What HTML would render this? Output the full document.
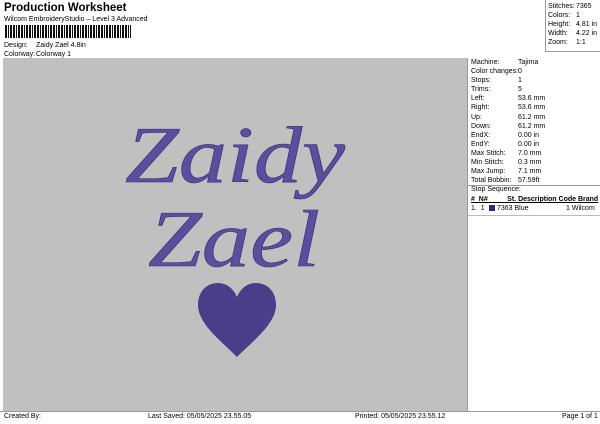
<!DOCTYPE html>
<html><head><style>
*{margin:0;padding:0;box-sizing:border-box}
body{width:600px;height:424px;background:#fff;font-family:"Liberation Sans",sans-serif;font-size:7px;color:#000;position:relative;overflow:hidden}
.a{position:absolute;white-space:nowrap}
.rp div{height:9.1px;line-height:9.1px}
</style></head><body>
<div class="a" style="left:4px;top:2px;font-size:11.5px;font-weight:bold">Production Worksheet</div>
<div class="a" style="left:4px;top:16px">Wilcom EmbroideryStudio – Level 3 Advanced</div>
<div class="a" style="left:5px;top:25px;width:126px;height:13px;background:repeating-linear-gradient(90deg,#111 0 2px,#fff 2px 3px,#111 3px 4px,#fff 4px 5px,#111 5px 7px,#fff 7px 8px)"></div>
<div class="a" style="left:4px;top:42px">Design:</div><div class="a" style="left:36px;top:42px">Zaidy Zael 4.8in</div>
<div class="a" style="left:4px;top:51px">Colorway:</div><div class="a" style="left:36px;top:51px">Colorway 1</div>
<div class="a" style="left:545px;top:0;width:55px;height:52px;border-left:1px solid #999;border-bottom:1px solid #999"></div>
<div class="a rp" style="left:548px;top:2px"><div>Stitches:</div><div>Colors:</div><div>Height:</div><div>Width:</div><div>Zoom:</div></div>
<div class="a rp" style="left:576px;top:2px"><div>7365</div><div>1</div><div>4.81 in</div><div>4.22 in</div><div>1:1</div></div>
<div class="a" style="left:3px;top:58px;width:464px;height:353px;background:#c0c0c0"></div>
<div class="a" style="left:467px;top:58px;width:1px;height:353px;background:#999"></div>
<div class="a rp" style="left:471px;top:58px"><div>Machine:</div><div>Color changes:</div><div>Stops:</div><div>Trims:</div><div>Left:</div><div>Right:</div><div>Up:</div><div>Down:</div><div>EndX:</div><div>EndY:</div><div>Max Stitch:</div><div>Min Stitch:</div><div>Max Jump:</div><div>Total Bobbin:</div></div>
<div class="a rp" style="left:518px;top:58px"><div>Tajima</div><div>0</div><div>1</div><div>5</div><div>53.6 mm</div><div>53.6 mm</div><div>61.2 mm</div><div>61.2 mm</div><div>0.00 in</div><div>0.00 in</div><div>7.0 mm</div><div>0.3 mm</div><div>7.1 mm</div><div>57.59ft</div></div>
<div class="a" style="left:468px;top:185px;width:132px;height:1px;background:#999"></div>
<div class="a" style="left:471px;top:186px">Stop Sequence:</div>
<div class="a" style="left:471px;top:196px;font-weight:bold;text-decoration:underline">#&nbsp; N#&nbsp;&nbsp;&nbsp;&nbsp;&nbsp;&nbsp;&nbsp;&nbsp;&nbsp; St. Description Code Brand</div>
<div class="a" style="left:471px;top:205px">1.&nbsp; 1</div>
<div class="a" style="left:489px;top:205px;width:6px;height:6px;background:#2a2a80"></div>
<div class="a" style="left:497px;top:205px">7363 Blue</div>
<div class="a" style="left:566px;top:205px">1 Wilcom</div>
<div class="a" style="left:468px;top:215px;width:132px;height:1px;background:#bbb"></div>
<div class="a" style="left:0;top:411px;width:600px;height:1px;background:#999"></div>
<div class="a" style="left:4px;top:413px">Created By:</div>
<div class="a" style="left:148px;top:413px">Last Saved: 05/05/2025 23.55.05</div>
<div class="a" style="left:355px;top:413px">Printed: 05/05/2025 23.55.12</div>
<div class="a" style="left:562px;top:413px">Page 1 of 1</div>
<svg class="a" style="left:0;top:0" width="600" height="424">
<g fill="#5b4e9e" stroke="#3a3070" stroke-width="0.6" font-family="Liberation Serif,serif" font-style="italic">
<text x="125" y="182" font-size="80" textLength="220" lengthAdjust="spacingAndGlyphs">Zaidy</text>
<text x="148" y="266" font-size="80" textLength="172" lengthAdjust="spacingAndGlyphs">Zael</text>
</g>
<path d="M237 357 C225 344 198 325 198 305 C198 291 207 283 218 283 C228 283 234 290 237 297 C240 290 246 283 256 283 C267 283 276 291 276 305 C276 325 249 344 237 357Z" fill="#4a3d8a"/>
</svg>
</body></html>
